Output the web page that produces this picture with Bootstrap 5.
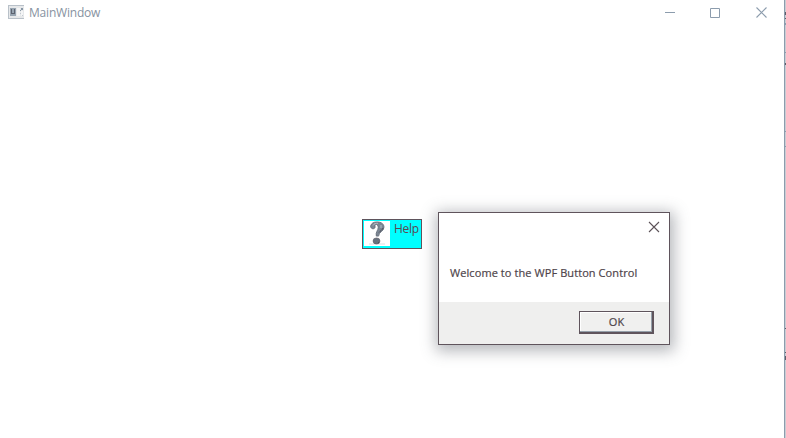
<!DOCTYPE html>
<html lang="en">
<head>
<meta charset="utf-8">
<title>MainWindow</title>
<link href="https://cdn.jsdelivr.net/npm/bootstrap@5.3.0/dist/css/bootstrap.min.css" rel="stylesheet">
<style>
body { width: 786px; height: 438px; font-family: "Open Sans", "Noto Sans", sans-serif; font-size: 12px; line-height: 16px; color: #5c5258; }
svg { display: block; flex: none; }
.main-window { width: 784px; }
.title-bar { height: 25px; padding: 0 17px 0 8px; color: #8792a1; }
.title-icon { margin-top: -1px; }
.title-text { margin-left: 5px; padding-top: 1px; letter-spacing: -.2px; }
.window-tools { gap: 35px; }
.close-icon { margin-left: 1px; }
.desktop-strip { width: 2px; border-left: 1px solid #8c9cad; background: #c9cdd3; }
.help-btn { left: 362px; top: 219px; width: 60px; height: 30px; padding: 1px 0 0 1px; border: 1px solid #5f545c; border-radius: 0; background: #0ff; color: #5c4850; font-size: 12px; line-height: 16px; }
.help-label { letter-spacing: -.3px; }
.message-box { left: 438px; top: 212px; width: 232px; height: 133px; border: 1px solid #5f545c; box-shadow: 1px 3px 14px 3px rgba(90, 96, 105, .45); }
.message-head { height: 29px; padding: 8px 9px 0; }
.message-text { padding: 2px 0 0 11px; font-size: 11px; letter-spacing: .08px; color: #4e444a; -webkit-text-stroke: .2px; }
.message-foot { height: 42px; padding: 0 15px 2px 0; background: #efefee; }
.ok-btn { width: 75px; height: 23px; padding: 0 0 0 1px; border: 1px solid #5f545c; border-width: 1px 2px 2px 1px; border-radius: 0; background: #f0f0ef; box-shadow: inset -1px -1px #95a0aa, inset 1px 1px #fff; color: #4e444a; font-size: 11px; line-height: 20px; -webkit-text-stroke: .2px; }
</style>
<script src="https://cdn.jsdelivr.net/npm/bootstrap@5.3.0/dist/js/bootstrap.bundle.min.js"></script>
</head>
<body class="d-flex overflow-hidden bg-white position-relative">
<main class="main-window">
  <header class="title-bar d-flex align-items-center">
    <svg class="title-icon" width="16" height="14" viewBox="0 0 16 14" shape-rendering="crispEdges">
      <path fill="#e6e8ea" d="M0 0h16v14H0z"/><path fill="#b9c1c9" d="M0 0h16v1H0zM0 13h16v1H0zM0 1h1v12H0z"/>
      <path fill="#97a4b1" d="M2 3h6v8H2z"/><path fill="#5c6370" d="M3 4h1v5H3zM4 8h2v1H4zM6 4h1v5H6z"/>
      <path fill="#f4f5f6" d="M9 3h3v8H9zM13 6h2v5h-2z"/><path fill="#8796a5" d="M13 3h2v2h-2zM12 5h1v1h-1z"/><path fill="#c2c9d0" d="M12 8h1v1h-1zM14 10h1v1h-1z"/>
    </svg>
    <span class="title-text">MainWindow</span>
    <div class="window-tools ms-auto d-flex align-items-center">
      <svg width="10" height="10"><path fill="#8c9cad" d="M0 4h10v1H0z"/></svg>
      <svg width="10" height="10"><path fill="none" stroke="#8c9cad" d="M.5.5h9v9h-9z"/></svg>
      <svg class="close-icon" width="11" height="11"><path fill="none" stroke="#8c9cad" stroke-width="1.1" d="M.5.5l10 10M10.500.5l-10 10"/></svg>
    </div>
  </header>
</main>
<aside class="desktop-strip">
  <svg width="1" height="438" shape-rendering="crispEdges"><path fill="#5f5c68" d="M0 12h1v3H0zM0 18h1v1H0zM0 63h1v2H0zM0 328h1v1H0zM0 352h1v1H0zM0 356h1v4H0z"/><path fill="#8c9cad" d="M0 23h1v2H0zM0 52h1v1H0zM0 131h1v1H0zM0 146h1v1H0z"/></svg>
</aside>

<button class="help-btn btn position-absolute d-flex align-items-start" type="button">
  <svg width="26" height="25" viewBox="0 0 26 25">
    <path fill="#fff" d="M0 0h26v25H0z"/>
    <path fill="#eceff1" d="M5 22h16v2H5z"/>
    <path fill="#7b8693" stroke="#626a76" stroke-width=".8" d="M6.500 5.500C7 2.300 9.700.9 13 .9c4.200 0 7 2 7 5.300 0 4.200-5.300 4.600-5.400 8.900h-2.300c-1-4.100 1.900-5.600 1.900-8.600C14.200 4.200 12.900 3.200 11.600 3.500c-1 .4-.3 1.500-.5 2.700-.4 2.200-4 2.200-4.600-.7z"/>
    <ellipse cx="12.500" cy="20" rx="3.500" ry="3.100" fill="#68717d" stroke="#59535e" stroke-width=".5"/>
    <path fill="none" stroke="#b6bec7" d="M9 4.500C10 2.500 12 2 14 2.300M17 4v3"/>
    <path fill="none" stroke="#50515d" d="M19 7c-.5 2-3 3-4 4.500M14 21.500h1"/>
  </svg>
  <span class="help-label ms-1">Help</span>
</button>

<section class="message-box position-absolute bg-white d-flex flex-column" role="dialog">
  <div class="message-head d-flex justify-content-end">
    <svg width="12" height="12"><path fill="none" stroke="#5c5258" stroke-width="1.1" d="M1 1l10 10M11 1l-10 10"/></svg>
  </div>
  <div class="message-text flex-grow-1 d-flex align-items-center text-nowrap">Welcome to the WPF Button Control</div>
  <div class="message-foot d-flex align-items-center justify-content-end">
    <button class="ok-btn btn" type="button">OK</button>
  </div>
</section>
</body>
</html>
